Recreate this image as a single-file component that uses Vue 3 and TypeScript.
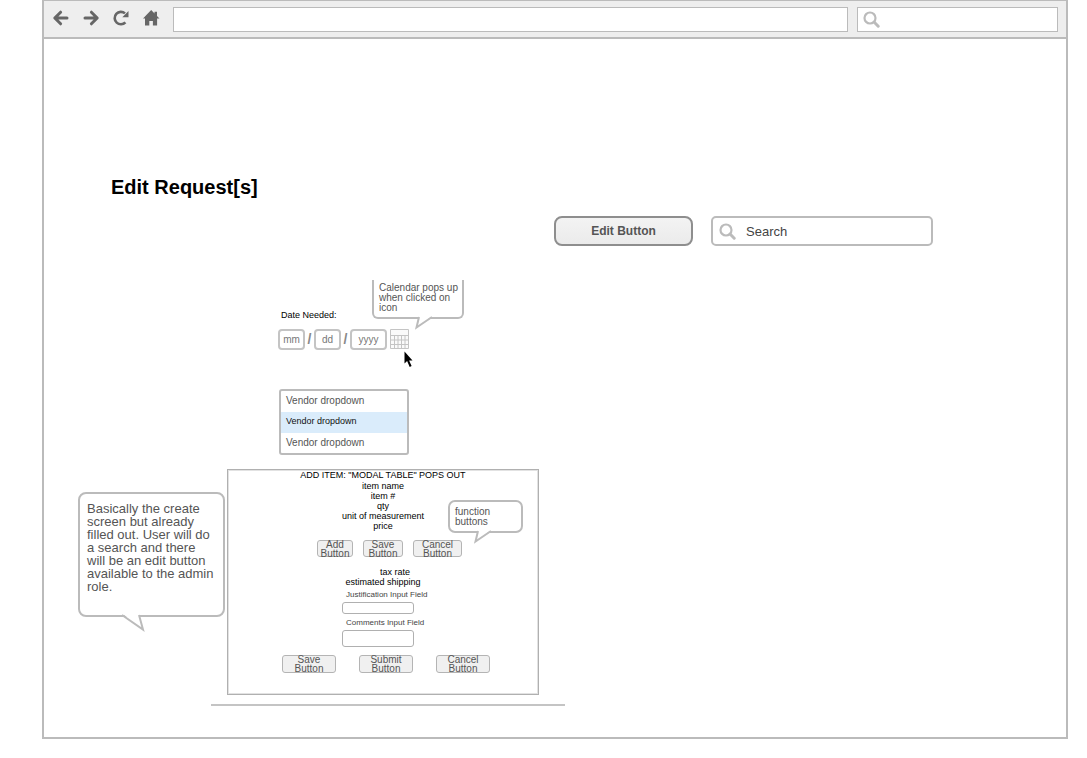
<script setup lang="ts">
import { ref } from 'vue'

const address = ref('')
const webSearch = ref('')
const query = ref('Search')
const month = ref('')
const day = ref('')
const year = ref('')
const justification = ref('')
const comments = ref('')

const vendors = ['Vendor dropdown', 'Vendor dropdown', 'Vendor dropdown']
const vendor = ref(1)

const itemFields = ['item name', 'item #', 'qty', 'unit of measurement', 'price']
const formActions = ['Save', 'Submit', 'Cancel']
</script>

<template>
  <div class="window">
    <header class="toolbar">
      <nav class="nav">
        <button type="button" aria-label="Back">
          <svg viewBox="0 0 16 16" class="stroked"><path d="M7.600 2.200 1.800 8l5.800 5.800M2.400 8H14" /></svg>
        </button>
        <button type="button" aria-label="Forward">
          <svg viewBox="0 0 16 16" class="stroked"><path d="M8.400 2.200 14.200 8l-5.800 5.800M13.600 8H2" /></svg>
        </button>
        <button type="button" aria-label="Reload">
          <svg viewBox="0 0 16 16">
            <path d="M12.400 12.300A6.200 6.200 0 1 1 12 3.400" fill="none" stroke="#666" stroke-width="2.600" />
            <path d="M15.500 1v6.200H9.300z" fill="#666" />
          </svg>
        </button>
        <button type="button" aria-label="Home">
          <svg viewBox="0 0 16 16">
            <path d="M8.200 0 0 8.500h2V15.600h4.300V11h3.600v4.600h4.200V8.500H16.500L14 5.900V1.800h-2.500v1.600z" fill="#666" />
          </svg>
        </button>
      </nav>
      <input v-model="address" class="address" type="text" aria-label="Address" />
      <label class="web-search">
        <svg viewBox="0 0 17 17" class="lens"><circle cx="7" cy="7" r="5.500" /><path d="m11.300 11.300 3.900 3.900" /></svg>
        <input v-model="webSearch" type="text" aria-label="Web search" />
      </label>
    </header>

    <main class="page">
      <h1>Edit Request[s]</h1>

      <div class="actions">
        <button type="button" class="edit">Edit Button</button>
        <label class="search">
          <svg viewBox="0 0 17 17" class="lens"><circle cx="7" cy="7" r="5.500" /><path d="m11.300 11.300 3.900 3.900" /></svg>
          <input v-model="query" type="text" aria-label="Search requests" />
        </label>
      </div>

      <section class="date">
        <label class="date-label" for="month">Date Needed:</label>
        <div class="date-row">
          <input id="month" v-model="month" type="text" placeholder="mm" />
          <span>/</span>
          <input v-model="day" type="text" placeholder="dd" aria-label="Day" />
          <span>/</span>
          <input v-model="year" class="year" type="text" placeholder="yyyy" aria-label="Year" />
          <button type="button" class="calendar" aria-label="Open calendar">
            <svg viewBox="0 0 19 20">
              <path d="M.5.5h18v19H.5zM.5 6.500h18M.5 11h18M.5 15.500h18M4.500 6.500v13M8 6.500v13M11.500 6.500v13M15 6.500v13" />
            </svg>
          </button>
        </div>
        <p class="callout date-tip">
          Calendar pops up<br />when clicked on<br />icon
          <svg class="tail" viewBox="0 0 18 12"><path class="fill" d="M4-2 1.500 10 17-2z" /><path d="M4-1 1.500 9.500 17-1" /></svg>
        </p>
        <svg class="pointer" viewBox="0 0 9 17"><path d="M.5.5v12l2.600-2.500 2.600 6 1.900-.9-2.500-5.500h3.400z" /></svg>
      </section>

      <select v-model="vendor" class="vendors" size="3" aria-label="Vendor">
        <option v-for="(name, i) in vendors" :key="i" :value="i">{{ name }}</option>
      </select>

      <div class="workspace">
        <aside class="callout note">
          Basically the create screen but already filled out. User will do a search and there will be an edit button
          available to the admin role.
          <svg class="tail" viewBox="0 0 24 16"><path class="fill" d="M2-2 22 14 18-2z" /><path d="M1-1 22 13.500 18-1" /></svg>
        </aside>

        <form class="modal" @submit.prevent>
          <h2>ADD ITEM: "MODAL TABLE" POPS OUT</h2>
          <ul>
            <li v-for="field in itemFields" :key="field">{{ field }}</li>
          </ul>
          <div class="item-actions">
            <button type="button" class="add">Add<br />Button</button>
            <button type="button" class="save">Save<br />Button</button>
            <button type="button" class="cancel">Cancel<br />Button</button>
          </div>
          <ul class="costs">
            <li class="tax">tax rate</li>
            <li>estimated shipping</li>
          </ul>
          <div class="fields">
            <label for="justification">Justification Input Field</label>
            <input id="justification" v-model="justification" type="text" />
            <label for="comments">Comments Input Field</label>
            <textarea id="comments" v-model="comments"></textarea>
          </div>
          <div class="form-actions">
            <button v-for="action in formActions" :key="action" type="button">{{ action }}<br />Button</button>
          </div>
          <p class="callout item-tip">
            function<br />buttons
            <svg class="tail" viewBox="0 0 18 12"><path class="fill" d="M4-2 1.500 10 17-2z" /><path d="M4-1 1.500 9.500 17-1" /></svg>
          </p>
        </form>
      </div>
      <hr />
    </main>
  </div>
</template>

<style>
body {
  margin: 0;
  background: #fff;
}
</style>

<style scoped>
.window,
.window * {
  box-sizing: border-box;
}
.window {
  margin: 0 19px 0 42px;
  min-height: calc(100vh - 19px);
  border: 2px solid #bbb;
  border-top-width: 1px;
  font-family: 'Liberation Sans', Arial, sans-serif;
  color: #000;
}
button,
input,
select,
textarea {
  font-family: inherit;
  margin: 0;
  padding: 0;
  outline: none;
}
svg {
  display: block;
}
h1,
h2,
p,
ul {
  margin: 0;
  padding: 0;
  list-style: none;
}

.toolbar {
  display: flex;
  align-items: center;
  height: 38px;
  padding: 0 8px 0 9px;
  background: #eee;
  border-bottom: 2px solid #bbb;
}
.nav {
  display: flex;
  gap: 14px;
  margin-right: 14px;
  padding-bottom: 2px;
}
.nav button {
  width: 16px;
  height: 16px;
  border: 0;
  background: none;
}
.nav svg {
  width: 16px;
  height: 16px;
  overflow: visible;
}
.stroked path {
  fill: none;
  stroke: #666;
  stroke-width: 3;
  stroke-linecap: round;
  stroke-linejoin: round;
}
.address,
.web-search {
  height: 25px;
  border: 1px solid #bbb;
  background: #fff;
}
.address {
  flex: 1;
  min-width: 0;
  margin-right: 9px;
}
.web-search {
  display: flex;
  align-items: center;
  width: 201px;
  padding-left: 5px;
}
.lens {
  flex: none;
  width: 17px;
  height: 17px;
  fill: none;
  stroke: #bbb;
  stroke-width: 2.2;
}
.lens path {
  stroke-width: 3;
  stroke-linecap: round;
}
.web-search input,
.search input {
  flex: 1;
  min-width: 0;
  border: 0;
  background: none;
  font-size: 13px;
  color: #444;
}

.page {
  padding: 136px 0 31px;
}
h1 {
  margin-left: 67px;
  font-size: 20px;
  line-height: 24px;
}
.actions {
  display: flex;
  gap: 18px;
  margin: 17px 0 0 510px;
}
.edit {
  width: 139px;
  height: 30px;
  border: 2px solid #8e8e8e;
  border-radius: 8px;
  background: linear-gradient(#f3f3f3, #ebebeb);
  font-size: 12px;
  font-weight: bold;
  color: #555;
}
.search {
  display: flex;
  align-items: center;
  gap: 10px;
  width: 222px;
  height: 30px;
  padding-left: 6px;
  border: 2px solid #bbb;
  border-radius: 5px;
}

.date {
  position: relative;
  width: 131px;
  margin: 64px 0 0 234px;
}
.date-label {
  display: block;
  padding-left: 3px;
  font-size: 9px;
  line-height: 10px;
}
.date-row {
  display: flex;
  margin-top: 9px;
}
.date-row input {
  width: 27px;
  height: 21px;
  border: 2px solid #c4c4c4;
  border-radius: 4px;
  font-size: 10px;
  text-align: center;
}
.date-row .year {
  width: 37px;
}
.date-row input::placeholder {
  color: #777;
}
.date-row span {
  width: 9px;
  font-size: 14px;
  font-weight: bold;
  line-height: 20px;
  text-align: center;
  color: #888;
}
.calendar {
  width: 19px;
  height: 20px;
  margin-left: 3px;
  border: 0;
  background: none;
}
.calendar svg {
  width: 19px;
  height: 20px;
  fill: #fafafa;
  stroke: #c4c4c4;
}
.pointer {
  position: absolute;
  left: 126px;
  top: 41px;
  width: 9px;
  height: 17px;
}

.callout {
  position: relative;
  border: 2px solid #bbb;
  border-radius: 7px;
  background: #fff;
  font-size: 10px;
  line-height: 10px;
  color: #555;
}
.tail {
  position: absolute;
  top: 100%;
  width: 18px;
  height: 12px;
  margin-top: 1px;
  overflow: visible;
  fill: none;
  stroke: #bbb;
  stroke-width: 2;
}
.tail .fill {
  fill: #fff;
  stroke: none;
}
.date-tip {
  position: absolute;
  left: 94px;
  top: -30px;
  width: 92px;
  height: 39px;
  padding: 3px 0 0 5px;
  border-top: 0;
  border-radius: 0 0 6px 6px;
  white-space: nowrap;
}
.date-tip .tail {
  left: 41px;
}

.vendors {
  display: block;
  width: 130px;
  height: 66px;
  margin: 39px 0 0 235px;
  border: 2px solid #bbb;
  border-radius: 3px;
  appearance: none;
  overflow: hidden;
  background: #fff;
}
.vendors option {
  height: 21px;
  padding: 4px 5px 0;
  font-size: 10px;
  color: #555;
}
.vendors option:checked {
  background: #daecfb linear-gradient(#daecfb, #daecfb);
  font-size: 9px;
  color: #111;
}

.workspace {
  display: flex;
  align-items: flex-start;
  gap: 2px;
  margin: 14px 0 0 34px;
}
.note {
  width: 147px;
  min-height: 125px;
  margin-top: 23px;
  padding: 8px 7px;
  border-radius: 8px;
  font-size: 13px;
  line-height: 13px;
}
.note .tail {
  left: 41px;
  width: 24px;
  height: 16px;
}
.modal {
  position: relative;
  width: 312px;
  padding-bottom: 21px;
  border: 1px solid #b0b0b0;
  box-shadow: inset 0 0 0 1px #e2e2e2;
  font-size: 9px;
  line-height: 10px;
  text-align: center;
}
h2 {
  margin-bottom: 1px;
  font-size: 9px;
  font-weight: normal;
  line-height: 10px;
}
.item-actions,
.form-actions {
  display: flex;
}
.item-actions {
  gap: 10px;
  margin-top: 9px;
  padding-left: 89px;
}
.modal button {
  display: flex;
  align-items: center;
  justify-content: center;
  height: 17px;
  border: 1px solid #b4b4b4;
  border-radius: 3px;
  background: #f0f0f0;
  font-size: 10px;
  line-height: 9px;
  color: #555;
}
.modal .add {
  width: 36px;
}
.modal .save {
  width: 40px;
}
.modal .cancel {
  width: 49px;
}
.costs {
  margin-top: 10px;
}
.tax {
  padding-left: 24px;
}
.fields {
  display: flex;
  flex-direction: column;
  align-items: flex-start;
  padding: 3px 0 0 114px;
}
.fields label {
  padding-left: 4px;
  font-size: 8px;
  color: #444;
}
.fields input,
.fields textarea {
  display: block;
  width: 72px;
  height: 12px;
  margin: 2px 0 4px;
  border: 1px solid #b0b0b0;
  border-radius: 3px;
  resize: none;
}
.fields textarea {
  height: 17px;
  margin-bottom: 8px;
}
.form-actions {
  gap: 23px;
  padding-left: 54px;
}
.form-actions button {
  width: 54px;
  height: 18px;
}
.item-tip {
  position: absolute;
  left: 220px;
  top: 30px;
  width: 75px;
  height: 33px;
  padding: 5px 0 0 5px;
  text-align: left;
}
.item-tip .tail {
  left: 24px;
}
hr {
  width: 354px;
  height: 2px;
  margin: 9px 0 0 167px;
  border: 0;
  background: #c4c4c4;
}
</style>
